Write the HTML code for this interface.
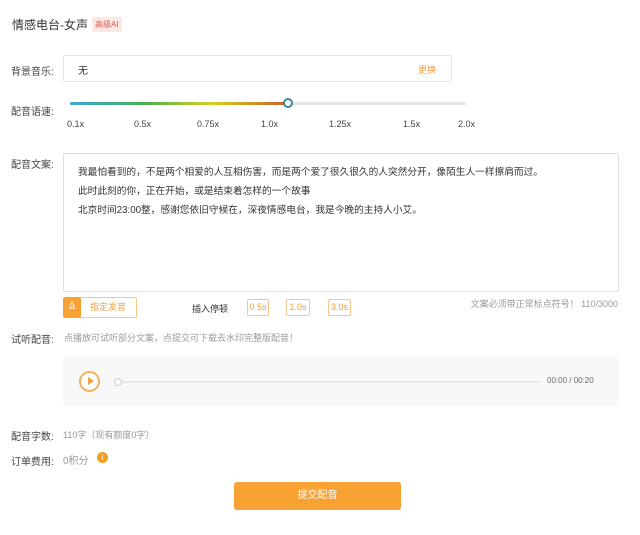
<!DOCTYPE html><html><head><meta charset="utf-8"><style>
*{margin:0;padding:0;box-sizing:border-box}
body{width:640px;height:535px;background:#fff;font-family:"Liberation Sans","Noto Sans CJK SC",sans-serif;color:#333;position:relative;overflow:hidden}
.a{position:absolute;white-space:nowrap}
.lbl{font-size:10px;color:#444}
.g{color:#999;font-size:9px}
.tb{border:1px solid #f5c78a;color:#f0a040;font-size:9px;text-align:center;line-height:15px;border-radius:2px;height:17px}
</style></head><body>
<div class="a" style="left:12px;top:16px;font-size:12px;color:#333">情感电台-女声</div>
<div class="a" style="left:92px;top:17px;background:#fde8e6;color:#e05a4a;font-size:8px;padding:2px 3px;border-radius:2px">高级AI</div>

<div class="a lbl" style="left:11px;top:63px">背景音乐:</div>
<div class="a" style="left:63px;top:55px;width:389px;height:27px;border:1px solid #e6e6e6;border-radius:2px"></div>
<div class="a" style="left:78px;top:62px;font-size:10px">无</div>
<div class="a" style="left:418px;top:63px;font-size:9px;color:#f0a040">更换</div>

<div class="a lbl" style="left:11px;top:103px">配音语速:</div>
<div class="a" style="left:70px;top:102px;width:396px;height:3px;background:#e4e4e4;border-radius:2px"></div>
<div class="a" style="left:70px;top:102px;width:218px;height:3px;border-radius:2px;background:linear-gradient(90deg,#3aa9d8,#4cb050 35%,#d8d020 65%,#c9602a)"></div>
<div class="a" style="left:283px;top:98px;width:10px;height:10px;border:2px solid #3a8a9a;border-radius:50%;background:#fff"></div>
<div class="a" style="top:119px;font-size:9px;color:#444;left:67px">0.1x</div>
<div class="a" style="top:119px;font-size:9px;color:#444;left:134px">0.5x</div>
<div class="a" style="top:119px;font-size:9px;color:#444;left:197px">0.75x</div>
<div class="a" style="top:119px;font-size:9px;color:#444;left:261px">1.0x</div>
<div class="a" style="top:119px;font-size:9px;color:#444;left:329px">1.25x</div>
<div class="a" style="top:119px;font-size:9px;color:#444;left:403px">1.5x</div>
<div class="a" style="top:119px;font-size:9px;color:#444;left:458px">2.0x</div>

<div class="a lbl" style="left:11px;top:156px">配音文案:</div>
<div class="a" style="left:63px;top:153px;width:556px;height:139px;border:1px solid #e0e0e0;border-radius:2px"></div>
<div class="a" style="left:78px;top:163px;font-size:9.7px;line-height:19px;color:#333">我最怕看到的，不是两个相爱的人互相伤害，而是两个爱了很久很久的人突然分开，像陌生人一样擦肩而过。<br>此时此刻的你，正在开始，或是结束着怎样的一个故事<br>北京时间23:00整，感谢您依旧守候在，深夜情感电台，我是今晚的主持人小艾。</div>

<div class="a" style="left:63px;top:297px;width:18px;height:21px;background:#f7a233;color:#fff;font-size:11px;text-align:center;line-height:19px;border-radius:2px 0 0 2px">ā</div>
<div class="a" style="left:80px;top:297px;width:57px;height:21px;border:1px solid #f5c78a;border-left:none;color:#f0a040;font-size:9px;text-align:center;line-height:19px;border-radius:0 2px 2px 0">指定发音</div>
<div class="a" style="left:192px;top:302px;font-size:9px;color:#333">插入停顿</div>
<div class="a tb" style="left:247px;top:299px;width:22px">0.5s</div>
<div class="a tb" style="left:286px;top:299px;width:24px">1.0s</div>
<div class="a tb" style="left:328px;top:299px;width:23px">3.0s</div>
<div class="a g" style="right:22px;top:297px">文案必须带正常标点符号！ 110/3000</div>

<div class="a lbl" style="left:11px;top:331px">试听配音:</div>
<div class="a g" style="left:64px;top:331px">点播放可试听部分文案，点提交可下载去水印完整版配音！</div>
<div class="a" style="left:63px;top:357px;width:556px;height:49px;background:#f8f8f8;border-radius:3px"></div>
<div class="a" style="left:79px;top:371px;width:21px;height:21px;border:2px solid #f0b060;border-radius:50%;background:#fff"></div>
<div class="a" style="left:88px;top:377px;width:0;height:0;border-left:6px solid #f0a040;border-top:4.5px solid transparent;border-bottom:4.5px solid transparent"></div>
<div class="a" style="left:118px;top:381px;width:423px;height:2px;background:#e8e8e8"></div>
<div class="a" style="left:114px;top:378px;width:8px;height:8px;border:1px solid #ccc;border-radius:50%;background:#fff"></div>
<div class="a" style="left:547px;top:376px;font-size:8px;color:#666">00:00 / 00:20</div>

<div class="a lbl" style="left:11px;top:428px">配音字数:</div>
<div class="a g" style="left:63px;top:428px">110字（现有额度0字）</div>
<div class="a lbl" style="left:11px;top:453px">订单费用:</div>
<div class="a" style="left:63px;top:452px;font-size:10px;color:#999">0积分</div>
<div class="a" style="left:97px;top:452px;width:11px;height:11px;border-radius:50%;background:#f0a020;color:#fff;font-size:8px;text-align:center;line-height:11px">i</div>

<div class="a" style="left:234px;top:482px;width:167px;height:28px;background:#f7a233;border-radius:3px;color:#fff;font-size:10px;text-align:center;line-height:28px">提交配音</div>
</body></html>
